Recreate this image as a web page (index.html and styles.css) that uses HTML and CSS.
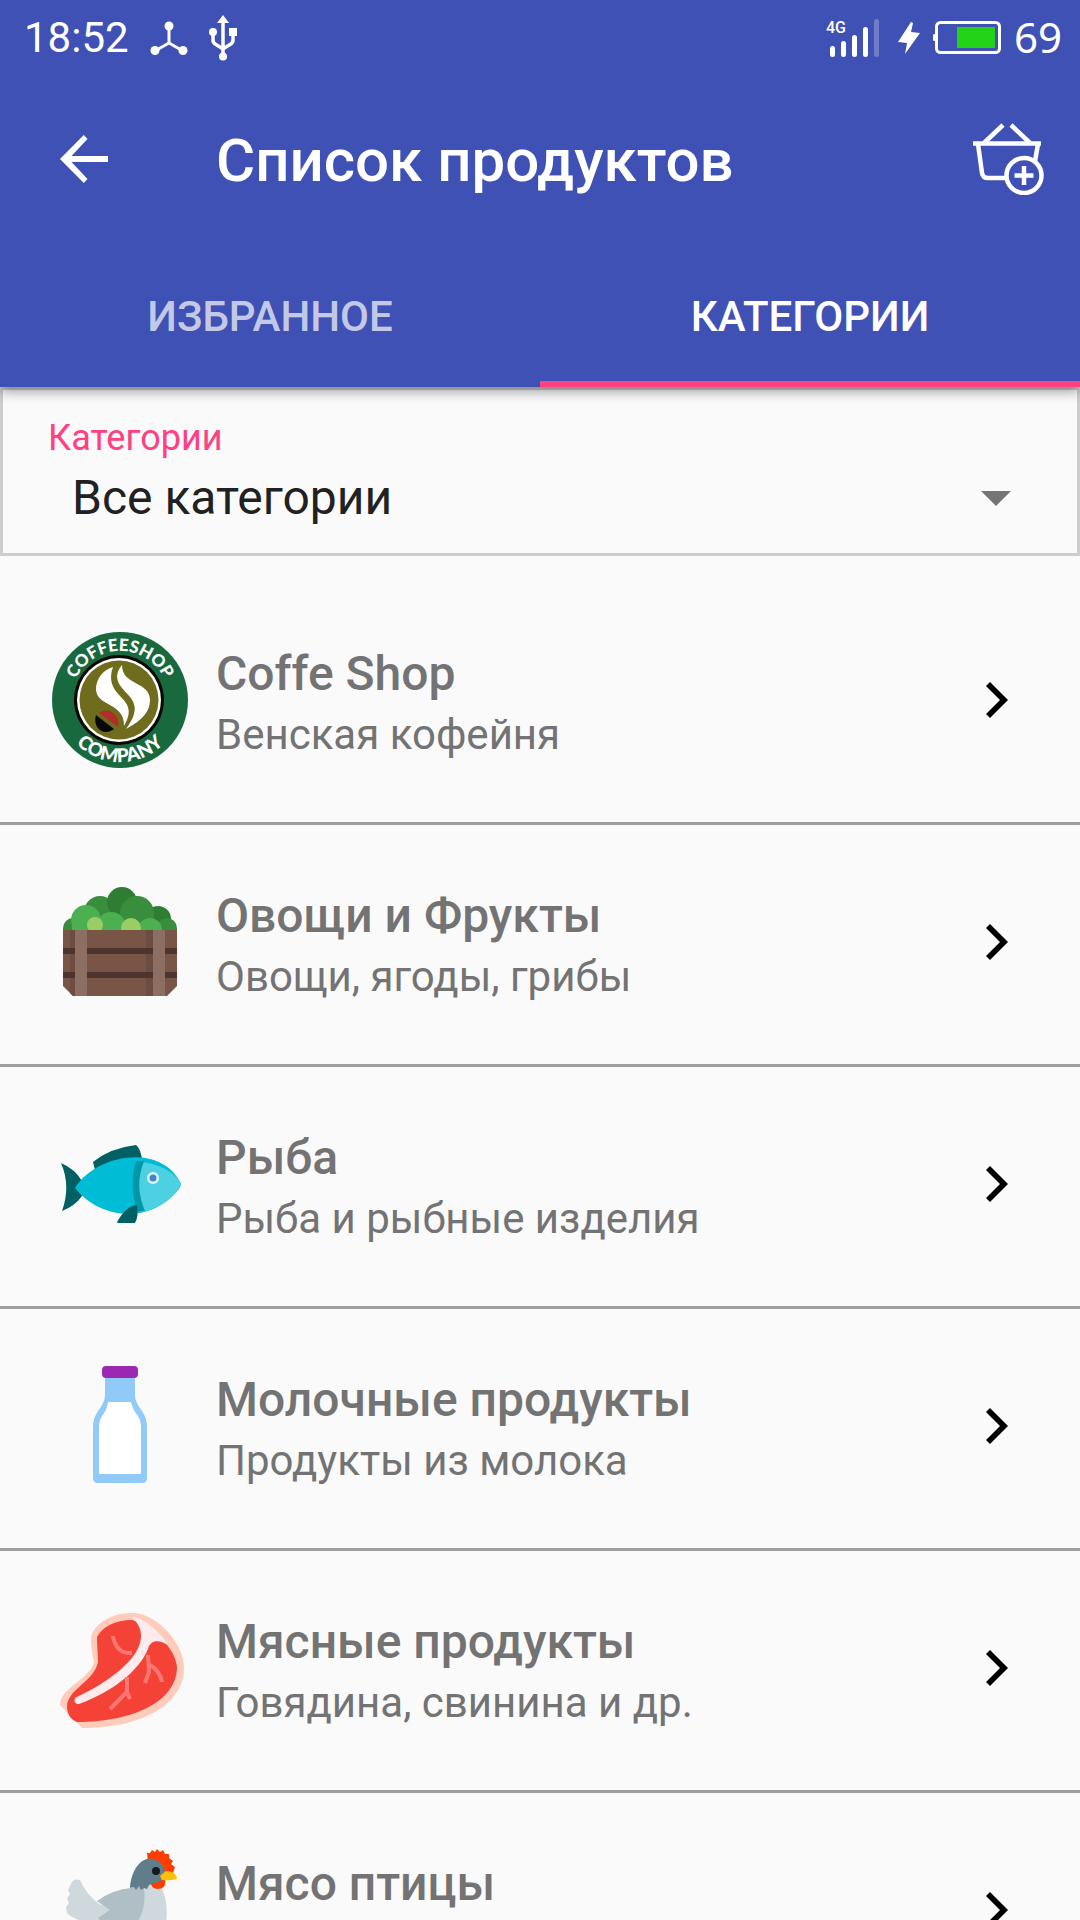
FILE: index.html
```html
<!DOCTYPE html>
<html lang="ru">
<head>
<meta charset="utf-8">
<meta name="viewport" content="width=device-width, initial-scale=1">
<title>Список продуктов</title>
<link rel="stylesheet" href="styles.css">
</head>
<body>
<header class="app-header">
  <div class="status-bar">
    <div class="status-group status-start">
      <span class="clock">18:52</span>
      <svg class="hub-icon" width="38" height="34" viewBox="0 0 38 34" fill="#fff" aria-hidden="true">
        <path d="M19 4v18L5 30M19 22l14 8" fill="none" stroke="#fff" stroke-width="3"/>
        <circle cx="19" cy="5" r="4.5"/><circle cx="5" cy="29.500" r="4.500"/><circle cx="33" cy="29.500" r="4.500"/>
      </svg>
      <svg class="usb-icon" width="28" height="46" viewBox="0 0 28 46" fill="#fff" aria-hidden="true">
        <path d="M14 4v36M4 17v8q0 3 3 4.500l7 4.500 7-4.500q3-1.500 3-4.500v-8" fill="none" stroke="#fff" stroke-width="3.500"/>
        <path d="M14 0l6 8H8zM20 13h8v8h-8z"/><circle cx="4" cy="17" r="4"/><circle cx="14" cy="41.500" r="4"/>
      </svg>
    </div>
    <div class="status-group status-end">
      <svg class="signal-icon" width="53" height="38" viewBox="0 0 53 38" aria-label="4G">
        <text class="network" x="0" y="14">4G</text>
        <path d="M6.500 29.500v6M17.500 24.500v11M28.500 18.500v17M39.500 10.500v25" stroke="#fff" stroke-width="5" stroke-linecap="round"/>
        <path d="M50.500 2.500v33" stroke="#fff" stroke-opacity=".25" stroke-width="5" stroke-linecap="round"/>
      </svg>
      <svg class="bolt-icon" width="22" height="32" viewBox="0 0 22 32" aria-hidden="true"><path d="M13 0L0 20l9 1-2 11L22 11l-9-1 2-9z" fill="#fff"/></svg>
      <svg class="battery-icon" width="68" height="34" viewBox="0 0 68 34" aria-hidden="true">
        <rect x="3.500" y="1.500" width="63" height="30" rx="4" fill="none" stroke="#fff" stroke-width="3"/>
        <path d="M0 14q0-1 2-1v7q-2 0-2-1z" fill="#fff"/><path d="M24 6h38v21H24z" fill="#23d318"/>
      </svg>
      <span class="battery-level">69</span>
    </div>
  </div>
  <div class="toolbar">
    <button class="icon-button" type="button" aria-label="Назад">
      <svg width="48" height="48" viewBox="0 0 48 48"><path d="M48 21H11.500L27.500 4 23.800 0 0 24l23.800 24 3.700-4L11.500 27H48z" fill="#fff"/></svg>
    </button>
    <h1>Список продуктов</h1>
    <button class="icon-button basket" type="button" aria-label="Добавить в корзину">
      <svg width="72" height="72" viewBox="0 0 72 72" fill="none" stroke="#fff" stroke-width="4.500">
        <path d="M1 20.500h68M12 20L31 2M58 20L39 2M6 21l4 29q1 5 6 5h20M66 21l-3 17"/>
        <circle cx="52" cy="52.500" r="17.500"/><path d="M52 43v19M42.500 52.500h19"/>
      </svg>
    </button>
  </div>
  <nav class="tabs" role="tablist">
    <button class="tab" type="button" role="tab" aria-selected="false">ИЗБРАННОЕ</button>
    <button class="tab active" type="button" role="tab" aria-selected="true">КАТЕГОРИИ</button>
  </nav>
</header>
<main>
  <div class="filter">
    <label for="category">Категории</label>
    <div class="select-row">
      <select id="category"><option>Все категории</option></select>
      <svg class="caret" width="30" height="15" viewBox="0 0 30 15" aria-hidden="true"><path d="M0 0h30L15 15z" fill="#757575"/></svg>
    </div>
  </div>
  <ul class="categories">
    <li><a href="#coffee">
      <svg class="picture" viewBox="0 0 144 144" aria-hidden="true">
        <circle cx="72" cy="72" r="68" fill="#19693f"/>
        <circle cx="71" cy="72" r="45" fill="#080804"/>
        <circle cx="71" cy="72" r="42" fill="#fff"/>
        <circle cx="71" cy="72" r="39.500" fill="#6f6c1d"/>
        <path d="M65 39C54 42 48 52 48 61c0 18 29 13 28 37 9-15 4-22-4-30-9-9-11-18-7-29z" fill="#fff"/>
        <path d="M74 37c-7 8-6 16 0 23 8 10 22 17 4 41 17-9 24-18 24-29 0-19-28-14-28-35z" fill="#fff"/>
        <path d="M51 85c8-7 22 1 19 14z" fill="#b12c2a"/>
        <path d="M48 87l18 14c-10 8-22-1-18-14z" fill="#080804"/>
        <path id="arc-top" d="M23 72A49 49 0 0 1 121 72" fill="none"/>
        <path id="arc-bottom" d="M10 72A62 62 0 0 0 134 72" fill="none"/>
        <text class="badge-text"><textPath href="#arc-top" startOffset="50%">COFFEESHOP</textPath></text>
        <text class="badge-text badge-text-wide"><textPath href="#arc-bottom" startOffset="50%">COMPANY</textPath></text>
      </svg>
      <span class="copy"><strong>Coffe Shop</strong><span>Венская кофейня</span></span>
      <svg class="chevron" viewBox="0 0 22 36" aria-hidden="true"><path d="M4 0L0 4l14 14L0 32l4 4 18-18z"/></svg>
    </a></li>
    <li><a href="#vegetables">
      <svg class="picture" viewBox="0 0 144 144" aria-hidden="true">
        <g fill="#388e3c"><circle cx="52" cy="42" r="16"/><circle cx="25" cy="58" r="10"/></g>
        <g fill="#2e7d32"><circle cx="74" cy="32" r="15"/><circle cx="110" cy="49" r="13"/></g>
        <circle cx="89" cy="43" r="17" fill="#388e3c"/><circle cx="119" cy="58" r="10" fill="#388e3c"/><path d="M15 58h114v5H15zM60 44h46v18H60z" fill="#388e3c"/>
        <g fill="#4caf50"><circle cx="38" cy="50" r="15"/><circle cx="63" cy="57" r="15"/><circle cx="102" cy="60" r="12"/><path d="M24 54h58v8H24z"/></g>
        <g fill="#9ccc65"><circle cx="47" cy="55" r="8"/><circle cx="83" cy="58" r="10"/></g>
        <path d="M15 60h114v56l-10 10H25l-10-10z" fill="#795548"/>
        <path d="M22 60h5v66h-2l-3-3zM98 60h7v66h-7z" fill="#6d4c41"/>
        <path d="M15 78h114v6H15zM15 102h114v6H15z" fill="#4e342e"/>
        <path d="M27 60h12v66H27zM105 60h12v66h-12z" fill="#8d6e63"/>
      </svg>
      <span class="copy"><strong>Овощи и Фрукты</strong><span>Овощи, ягоды, грибы</span></span>
      <svg class="chevron" viewBox="0 0 22 36" aria-hidden="true"><path d="M4 0L0 4l14 14L0 32l4 4 18-18z"/></svg>
    </a></li>
    <li><a href="#fish">
      <svg class="picture" viewBox="0 0 144 144" aria-hidden="true">
        <path d="M13 51q14 6 21 18v15q-7 10-20 15 9-25-1-48zM47 58l-2-8q17-14 43-17 4 2 7 18z" fill="#006064"/>
        <path d="M27 76C48 42 112 31 132 70c2 2 0 5-2 8-14 17-32 24-51 24-23-1-41-12-52-26z" fill="#00bcd4"/>
        <path d="M95 50q26 4 37 20 2 3-1 7-13 17-36 23-9-26 0-50z" fill="#4dd0e1"/>
        <path d="M88 49h8q-10 25 1 50h-8q-8-26-1-50z" fill="#0097a7"/>
        <path d="M69 110q9-16 20-17 2 11-2 18H70z" fill="#006064"/>
        <circle cx="105" cy="66" r="6" fill="#e1f5fe"/><circle cx="105" cy="66" r="3.500" fill="#4385c7"/>
      </svg>
      <span class="copy"><strong>Рыба</strong><span>Рыба и рыбные изделия</span></span>
      <svg class="chevron" viewBox="0 0 22 36" aria-hidden="true"><path d="M4 0L0 4l14 14L0 32l4 4 18-18z"/></svg>
    </a></li>
    <li><a href="#milk">
      <svg class="picture" viewBox="0 0 144 144" aria-hidden="true">
        <path d="M57 23h30v18q0 7 7 16 5 8 5 15v52q0 5-5 5H50q-5 0-5-5V72q0-7 5-15 7-9 7-16z" fill="#90caf9"/>
        <path d="M60 48h23q2 8 7 14 3 5 3 12v46H51V74q0-7 3-12 5-6 6-14z" fill="#fff"/>
        <rect x="54" y="12" width="36" height="12" rx="4" fill="#9c27b0"/>
      </svg>
      <span class="copy"><strong>Молочные продукты</strong><span>Продукты из молока</span></span>
      <svg class="chevron" viewBox="0 0 22 36" aria-hidden="true"><path d="M4 0L0 4l14 14L0 32l4 4 18-18z"/></svg>
    </a></li>
    <li><a href="#meat">
      <svg class="picture" viewBox="0 0 144 144" aria-hidden="true">
        <path d="M82 17C106 15 136 45 136 72c0 36-41 60-102 60L12 109c0-17 31-27 34-43-2-10-3-15-3-22 0-14 19-27 39-27z" fill="#ffccbc"/>
        <path d="M84 24c20 8 43 26 45 47 0 34-43 55-100 55-6-2-10-8-10-15 0-18 27-25 31-45 0-6-1-17-1-25 5-10 18-17 35-17z" fill="#f44336"/>
        <path d="M84 21c12 0 28 15 36 28-9-6-18-5-20 4-9 22-36 43-69 55q-6 0-4-6c43-20 85-54 57-81z" fill="#ffebee"/>
        <path d="M65 40q3 18 19 17M100 59l1 17-4 11M102 69q10 6 12 17M79 81v15l-17 17M79 96l3 7" fill="none" stroke="#ff7770" stroke-width="4"/>
      </svg>
      <span class="copy"><strong>Мясные продукты</strong><span>Говядина, свинина и др.</span></span>
      <svg class="chevron" viewBox="0 0 22 36" aria-hidden="true"><path d="M4 0L0 4l14 14L0 32l4 4 18-18z"/></svg>
    </a></li>
    <li><a href="#poultry">
      <svg class="picture" viewBox="0 0 144 144" aria-hidden="true">
        <path d="M96 46h16q9 18 6 38-8 34-42 34-30-2-46-40z" fill="#cfd8dc"/>
        <path d="M32 42q-7-2-9 4l-3 6 2 4-3 5 2 4-3 4 1 6q5 5 12 7 16 26 36 28l16-32q-38-6-51-36z" fill="#cfd8dc"/>
        <path d="M49 63q17-12 34-13l12-4q6 26-11 45-21 3-34-11l12-8z" fill="#b0bec5"/>
        <path d="M100 24l-1-9 3 0 2-3 3 2 2-3 3 3 3-2 2 4 4 0v4l4 3-2 3 4 3-2 6-1 1-11-1z" fill="#ff3d00"/>
        <path d="M102 43l7-3 8 1q2 10-8 10-6-1-7-8z" fill="#ff3d00"/>
        <path d="M82 50C83 33 93 18 105 21c9 2 12 9 12 14q-2 9-10 10l-6 2-2 4-3-1-3 2-2-4-3 4-2-3z" fill="#607d8b"/>
        <circle cx="108" cy="33" r="4" fill="#111b20"/>
        <path d="M112 38l6-5q10 0 11 8-8 2-15 1z" fill="#ffc107"/>
      </svg>
      <span class="copy"><strong>Мясо птицы</strong></span>
      <svg class="chevron" viewBox="0 0 22 36" aria-hidden="true"><path d="M4 0L0 4l14 14L0 32l4 4 18-18z"/></svg>
    </a></li>
  </ul>
</main>
</body>
</html>
```
FILE: styles.css
```css
* { box-sizing: border-box; }
html, body { height: 100%; }
body {
  margin: 0;
  overflow: hidden;
  background: #fafafa;
  font-family: Roboto, "Liberation Sans", sans-serif;
  color: #737373;
}
svg { display: block; flex: none; }
button { border: 0; background: none; font: inherit; color: inherit; padding: 0; }
.app-header {
  position: relative;
  background: #3f51b5;
  color: #fff;
  box-shadow: 0 4px 12px rgba(0, 0, 0, .4);
}
.status-bar {
  display: flex;
  justify-content: space-between;
  height: 75px;
  padding: 0 18px 0 24px;
}
.status-group { display: flex; align-items: center; }
.clock { font-size: 42px; line-height: 48px; }
.status-start { gap: 21px; }
.status-end { gap: 13px; }
.signal-icon { margin-right: 6px; }
.network { font: 500 16px Roboto, sans-serif; fill: #fff; }
.battery-level { font: 42px/48px "Noto Sans", sans-serif; padding-bottom: 2px; }
.toolbar {
  display: flex;
  align-items: center;
  height: 168px;
  padding: 0 36px 0 60px;
}
.icon-button { flex: none; }
.toolbar h1 {
  flex: 1;
  margin: 0 0 0 108px;
  padding-top: 4px;
  font-size: 60px;
  line-height: 72px;
  font-weight: 500;
}
.tabs { display: flex; height: 144px; }
.tab {
  flex: 1;
  border-top: 8px solid transparent;
  border-bottom: 6px solid transparent;
  font-size: 42px;
  font-weight: 500;
  color: rgba(255, 255, 255, .7);
}
.tab.active { color: #fff; border-bottom-color: #ff4081; }
.filter { border: 3px solid #cdcdcd; padding: 24px 66px 22px 45px; }
.filter label { display: block; font-size: 36px; line-height: 48px; color: #ff4081; }
.select-row { display: flex; align-items: center; padding: 3px 0 0 24px; }
select {
  flex: 1;
  appearance: none;
  border: 0;
  padding: 0;
  background: none;
  font: 48px/66px Roboto, sans-serif;
  height: 66px;
  color: #212121;
}
.categories { margin: 27px 0 0; padding: 0; list-style: none; }
.categories li { border-bottom: 3px solid #9e9e9e; }
.categories a {
  display: flex;
  align-items: center;
  height: 239px;
  padding: 0 72px 5px 48px;
  color: inherit;
  text-decoration: none;
}
.picture { width: 144px; height: 144px; }
.copy {
  flex: 1;
  align-self: flex-start;
  display: flex;
  flex-direction: column;
  gap: 1px;
  margin-left: 24px;
  padding-top: 58px;
  font-size: 42px;
  line-height: 54px;
}
.copy strong { font-size: 48px; line-height: 66px; font-weight: 500; }
.chevron { width: 22px; height: 36px; }
.badge-text { font: 900 17px Lato, sans-serif; fill: #fff; text-anchor: middle; }
.badge-text-wide { font-size: 19px; }
```
